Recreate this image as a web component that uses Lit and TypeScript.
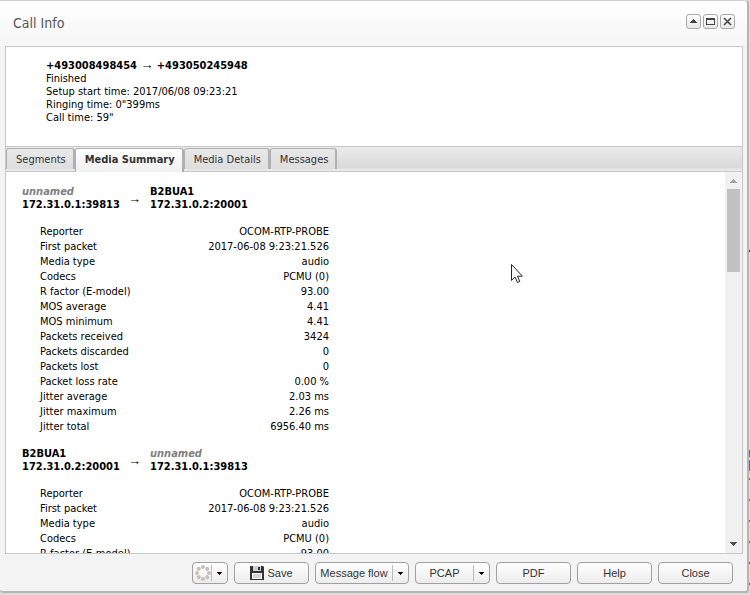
import { LitElement, html, css, svg } from "lit";
import { customElement, state } from "lit/decorators.js";

interface Endpoint { name: string; address: string; unnamed?: boolean; }
interface Stream { from: Endpoint; to: Endpoint; stats: [string, string][]; }

const STATS: [string, string][] = [
  ["Reporter", "OCOM-RTP-PROBE"],
  ["First packet", "2017-06-08 9:23:21.526"],
  ["Media type", "audio"],
  ["Codecs", "PCMU (0)"],
  ["R factor (E-model)", "93.00"],
  ["MOS average", "4.41"],
  ["MOS minimum", "4.41"],
  ["Packets received", "3424"],
  ["Packets discarded", "0"],
  ["Packets lost", "0"],
  ["Packet loss rate", "0.00 %"],
  ["Jitter average", "2.03 ms"],
  ["Jitter maximum", "2.26 ms"],
  ["Jitter total", "6956.40 ms"],
];

const CALLER: Endpoint = { name: "unnamed", address: "172.31.0.1:39813", unnamed: true };
const B2BUA: Endpoint = { name: "B2BUA1", address: "172.31.0.2:20001" };
const STREAMS: Stream[] = [
  { from: CALLER, to: B2BUA, stats: STATS },
  { from: B2BUA, to: CALLER, stats: STATS.slice(0, 5) },
];

const TABS = ["Segments", "Media Summary", "Media Details", "Messages"];

const caret = html`<svg viewBox="0 0 5 3" width="5" height="3" shape-rendering="crispEdges"><path d="M0 0h5v1H4v1H3v1H2V2H1V1H0z" fill="#000"/></svg>`;

@customElement("app-root")
export class AppRoot extends LitElement {
  static styles = css`
    :host {
      display: block; height: 100vh; overflow: hidden; color: #000;
      font: 11px/13px "DejaVu Sans Condensed", "DejaVu Sans", sans-serif;
      /* the page behind the dialog shows as a thin edge on the right */
      background:
        linear-gradient(#333, #333) right 250px / 1px 2px no-repeat,
        linear-gradient(#4a72a8, #4a72a8) right 450px / 1px 7px no-repeat,
        linear-gradient(#4a72a8, #4a72a8) right 460px / 1px 11px no-repeat,
        repeating-linear-gradient(#766a58 0 2px, #dedfcb 2px 10px, #dcdcdc 10px 21px) right 478px / 1px 107px no-repeat,
        #dcdcdc;
    }
    * { box-sizing: border-box; }
    button { font: inherit; color: inherit; margin: 0; padding: 0; cursor: default; white-space: nowrap; }
    .window { position: relative; display: flex; flex-direction: column; height: calc(100% - 2px); margin-right: 1px; padding: 0 4px 0 5px; border: solid #b5b5b5; border-width: 0 2px 2px 0; border-radius: 0 4px 3px 3px; background: #f3f3f3; }
    .title { display: flex; align-items: center; justify-content: space-between; height: 46px; flex: none; margin: 0 -4px 0 -5px; padding: 0 12px 0 13px; background: linear-gradient(#fff, #f6f6f6); border-top: 1px solid #d0d0d0; border-radius: 0 4px 0 0; }
    h1 { margin: 0; padding-bottom: 2px; font: 14px/18px "DejaVu Sans Condensed", "DejaVu Sans", sans-serif; color: #555; }
    .tools { display: flex; gap: 2px; padding-bottom: 4px; }
    .tool { display: block; width: 15px; height: 15px; border: 1px solid #a8a8a8; border-radius: 3px; background: linear-gradient(#fff, #e8e8e8); }
    .tool svg { display: block; }
    .panel { flex: 1; min-height: 0; display: flex; flex-direction: column; border: 1px solid #c8c8c8; background: #fff; }
    .info { flex: none; height: 99px; padding: 11px 40px; }
    .arrow { font: 13px/13px "Liberation Sans", Arial, sans-serif; }
    .tabs { flex: none; display: flex; height: 26px; padding-top: 1px; border-top: 1px solid #c8c8c8; border-bottom: 1px solid #c8c8c8; background: linear-gradient(#ebebeb, #d9d9d9 21px, #e8e8e8 22px); }
    .tab { height: 21px; padding: 0 7px 0 9px; border: 1px solid #b0b0b0; border-width: 1px 2px 0 1px; border-radius: 3px 3px 0 0; background: linear-gradient(#e8e8e8, #dedede); color: #333; }
    .tab.on { height: 24px; padding-bottom: 3px; font-weight: bold; background: linear-gradient(#fff, #f0f0f0); }
    .body { flex: 1; min-height: 0; display: flex; }
    .content { flex: 1; overflow-y: auto; scrollbar-width: none; padding: 13px 16px; }
    .route { display: flex; align-items: center; font-weight: bold; }
    .end { width: 97px; white-space: nowrap; }
    .hop { width: 31px; text-align: center; }
    .unnamed { font-style: italic; color: #808080; }
    .stats { width: 289px; margin: 13px 0 13px 18px; border-collapse: collapse; line-height: 15px; }
    .stats th { padding: 0; font-weight: normal; text-align: left; }
    .stats td { padding: 0; text-align: right; }
    .scroll { width: 17px; flex: none; background: #f1f1f1; display: flex; flex-direction: column; align-items: center; padding: 7px 0; }
    .thumb { width: 13px; height: 83px; margin: 6px 0 auto; background: #c1c1c1; }
    .actions { flex: none; display: flex; justify-content: flex-end; gap: 6px; height: 37px; padding: 8px 10px 0 0; font: 11px/14px "Liberation Sans", Arial, sans-serif; color: #333; }
    .btn { display: flex; align-items: center; justify-content: center; width: 75px; height: 22px; border: 1px solid #a0a0a0; border-radius: 4px; background: linear-gradient(#fff, #ececec); }
    .btn.save { gap: 3px; }
    .btn.wide { width: 94px; }
    .btn.icon { width: 36px; }
    .label { flex: 1; display: flex; justify-content: center; }
    .icon .label { justify-content: flex-end; }
    .drop { width: 16px; height: 16px; flex: none; border-left: 1px solid #bbb; display: flex; align-items: center; justify-content: center; }
    .pointer { position: absolute; left: 511px; top: 264px; }
  `;

  @state() private active = "Media Summary";

  private end(e: Endpoint) {
    return html`<div class="end"><div class=${e.unnamed ? "unnamed" : ""}>${e.name}</div><div>${e.address}</div></div>`;
  }

  render() {
    return html`
      <main class="window">
        <header class="title">
          <h1>Call Info</h1>
          <div class="tools">
            <button class="tool" aria-label="Collapse"><svg width="13" height="13" shape-rendering="crispEdges"><path d="M6 4h1v1h1v1h1v1h1v1H3V7h1V6h1V5h1z" fill="#444"/></svg></button>
            <button class="tool" aria-label="Maximize"><svg width="13" height="13" shape-rendering="crispEdges"><path d="M2 3h9v7H2zM3 5v4h7V5z" fill="#444" fill-rule="evenodd"/></svg></button>
            <button class="tool" aria-label="Close window"><svg width="13" height="13"><path d="M3 3l7 7M10 3l-7 7" stroke="#444" stroke-width="1.6"/></svg></button>
          </div>
        </header>
        <section class="panel">
          <div class="info">
            <div><b>+493008498454 <span class="arrow">→</span> +493050245948</b></div>
            <div>Finished</div>
            <div>Setup start time: 2017/06/08 09:23:21</div>
            <div>Ringing time: 0"399ms</div>
            <div>Call time: 59"</div>
          </div>
          <nav class="tabs" role="tablist">
            ${TABS.map((t) => html`<button role="tab" aria-selected=${t === this.active} class="tab ${t === this.active ? "on" : ""}" @click=${() => (this.active = t)}>${t}</button>`)}
          </nav>
          <div class="body">
            <div class="content">
              ${STREAMS.map((s) => html`
                <div class="route">${this.end(s.from)}<span class="hop arrow">→</span>${this.end(s.to)}</div>
                <table class="stats"><tbody>${s.stats.map(([k, v]) => html`<tr><th scope="row">${k}</th><td>${v}</td></tr>`)}</tbody></table>`)}
            </div>
            <div class="scroll">
              <svg width="7" height="4" shape-rendering="crispEdges"><path d="M3 0h1v1h1v1h1v1h1v1H0V3h1V2h1V1h1z" fill="#a3a3a3"/></svg>
              <div class="thumb"></div>
              <svg width="7" height="4" shape-rendering="crispEdges"><path d="M0 0h7v1H6v1H5v1H4v1H3V3H2V2H1V1H0z" fill="#505050"/></svg>
            </div>
          </div>
        </section>
        <footer class="actions">
          <button class="btn icon" aria-label="Refresh">
            <span class="label"><svg width="16" height="16" viewBox="0 0 16 16" fill="#c4c1ba">${[0, 45, 90, 135, 180, 225, 270, 315].map((a) => svg`<circle cx="8" cy="2" r="2" transform="rotate(${a} 8 8)"/>`)}</svg></span>
            <span class="drop">${caret}</span>
          </button>
          <button class="btn save"><svg width="14" height="14" viewBox="0 0 14 14"><path d="M0 0h13l1 1v13H0z" fill="#333"/><path d="M3 0h8v5H3z" fill="#ccd3d8"/><path d="M8 1h2v3H8z" fill="#333"/><path d="M2 7h10v6H2z" fill="#fff"/><path d="M3 9h8M3 11h8" stroke="#aaa"/></svg>Save</button>
          <button class="btn wide"><span class="label">Message flow</span><span class="drop">${caret}</span></button>
          <button class="btn"><span class="label">PCAP</span><span class="drop">${caret}</span></button>
          <button class="btn">PDF</button>
          <button class="btn">Help</button>
          <button class="btn">Close</button>
        </footer>
        <svg class="pointer" width="12" height="19" viewBox="0 0 12 19"><path d="M.5 .5v16l3.500-3.400 2.500 5.400 2.300-1-2.400-5.300h5z" fill="#fff" stroke="#223"/></svg>
      </main>`;
  }
}
